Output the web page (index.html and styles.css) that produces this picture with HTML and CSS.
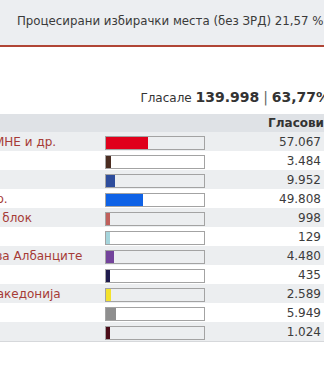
FILE: index.html
```html
<!DOCTYPE html>
<html lang="mk">
<head>
<meta charset="utf-8">
<title>Резултати</title>
<link rel="stylesheet" href="styles.css">
</head>
<body>
<div class="topbar">Процесирани избирачки места (без ЗРД) 21,57 %</div>
<div class="results">
  <div class="summary">Гласале <b class="big">139.998</b> <span class="sep">|</span> <b class="big">63,77%</b></div>
  <div class="table">
    <div class="row head"><div class="name"></div><div class="barcell"></div><div class="votes">Гласови</div></div>
    <div class="row odd"><div class="name">ВМРО-ДПМНЕ и др.</div><div class="barcell"><div class="bar"><div class="fill c1" style="width:42px"></div></div></div><div class="votes">57.067</div></div>
    <div class="row"><div class="name">Беса</div><div class="barcell"><div class="bar"><div class="fill c2" style="width:5px"></div></div></div><div class="votes">3.484</div></div>
    <div class="row odd"><div class="name">ДУИ</div><div class="barcell"><div class="bar"><div class="fill c3" style="width:9px"></div></div></div><div class="votes">9.952</div></div>
    <div class="row"><div class="name">СДСМ и др.</div><div class="barcell"><div class="bar"><div class="fill c4" style="width:37px"></div></div></div><div class="votes">49.808</div></div>
    <div class="row odd"><div class="name">Обединет блок</div><div class="barcell"><div class="bar"><div class="fill c5" style="width:4px"></div></div></div><div class="votes">998</div></div>
    <div class="row"><div class="name">ДОМ</div><div class="barcell"><div class="bar"><div class="fill c6" style="width:4px"></div></div></div><div class="votes">129</div></div>
    <div class="row odd"><div class="name">Алијанса за Албанците</div><div class="barcell"><div class="bar"><div class="fill c7" style="width:8px"></div></div></div><div class="votes">4.480</div></div>
    <div class="row"><div class="name">ДПА</div><div class="barcell"><div class="bar"><div class="fill c8" style="width:4px"></div></div></div><div class="votes">435</div></div>
    <div class="row odd"><div class="name">Глас за Македонија</div><div class="barcell"><div class="bar"><div class="fill c9" style="width:5px"></div></div></div><div class="votes">2.589</div></div>
    <div class="row"><div class="name">Левица</div><div class="barcell"><div class="bar"><div class="fill c10" style="width:10px"></div></div></div><div class="votes">5.949</div></div>
    <div class="row odd last"><div class="name">НДП</div><div class="barcell"><div class="bar"><div class="fill c11" style="width:4px"></div></div></div><div class="votes">1.024</div></div>
  </div>
</div>
</body>
</html>
```
FILE: styles.css
```css
html, body {
  margin: 0;
  padding: 0;
  overflow: hidden;
  background: #ffffff;
}
body {
  font-family: "DejaVu Sans", Verdana, sans-serif;
  font-size: 12px;
  color: #333333;
}
.topbar {
  height: 34px;
  padding: 11px 0 0 17px;
  line-height: 20px;
  font-size: 11.8px;
  background: #eceef1;
  border-bottom: 2px solid #b04535;
  white-space: nowrap;
  color: #3a3a3a;
}
.results {
  margin-left: -70px;
  width: 402px;
  padding-top: 40px;
}
.summary {
  text-align: right;
  padding-right: 2px;
  line-height: 20px;
  white-space: nowrap;
  color: #333333;
}
.summary .big {
  font-size: 14px;
  font-weight: bold;
}
.summary .sep {
  font-size: 14px;
  color: #666666;
}
.table {
  margin-top: 6px;
}
.row {
  display: grid;
  grid-template-columns: 175px 100px 1fr;
  height: 19px;
  align-items: center;
  background: #ffffff;
}
.row.odd {
  background: #eceef0;
}
.row.head {
  height: 18px;
  background: #dfe2e6;
  font-weight: bold;
}
.row.last {
  border-bottom: 1px solid #d6d8db;
}
.name {
  padding-left: 6px;
  white-space: nowrap;
  overflow: hidden;
  color: #a63b36;
}
.barcell {
  display: flex;
  align-items: center;
  height: 100%;
}
.bar {
  width: 98px;
  height: 12px;
  border: 1px solid #a3a3a3;
  margin-top: 2px;
  display: flex;
}
.fill {
  height: 100%;
}
.votes {
  text-align: right;
  padding-right: 11px;
  white-space: nowrap;
  color: #3c3c3c;
}
.head .votes {
  padding-right: 8px;
  color: #333333;
}
.c1 { background: #e0001b; }
.c2 { background: #4a2c20; }
.c3 { background: #2e4d9c; }
.c4 { background: #0f62e6; }
.c5 { background: #c0605c; }
.c6 { background: #a6d5dc; }
.c7 { background: #73439b; }
.c8 { background: #1f1b4d; }
.c9 { background: #f3e22d; }
.c10 { background: #8e8e8e; }
.c11 { background: #4b0c18; }
```
